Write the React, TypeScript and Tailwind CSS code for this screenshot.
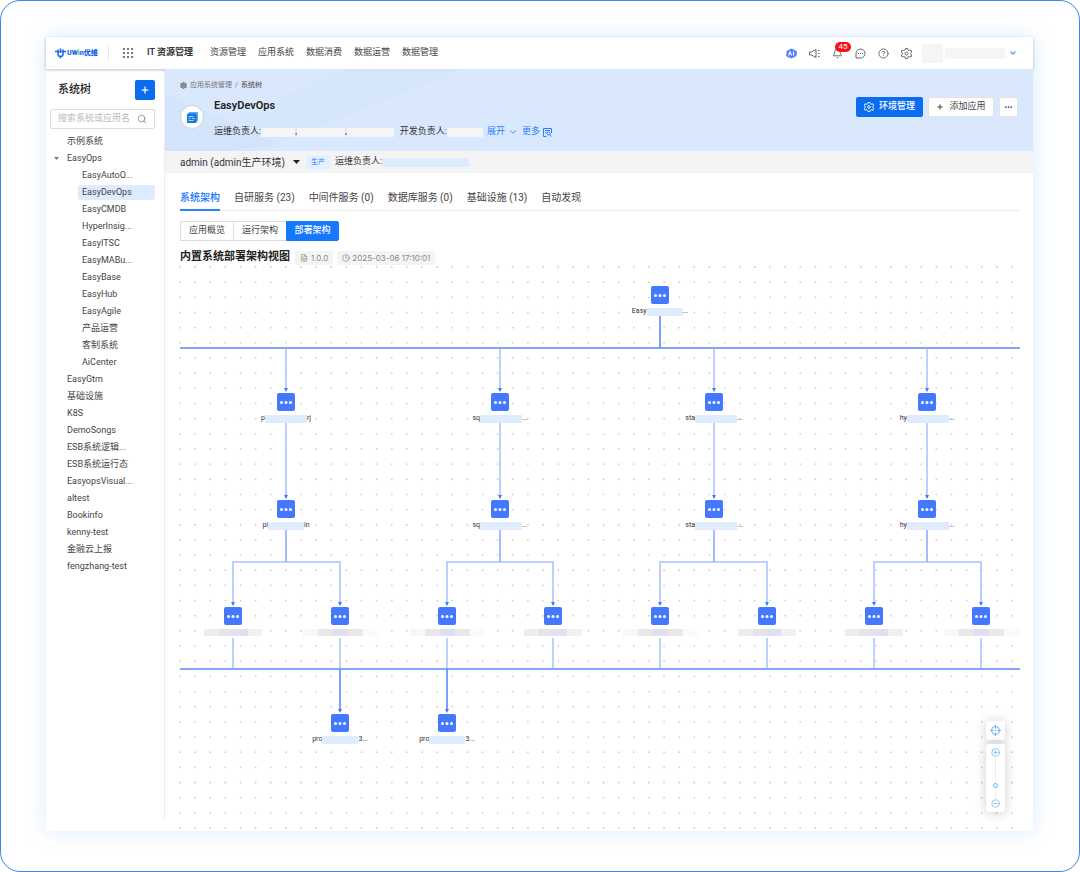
import type { ReactNode } from "react";
import { ChevronDown, CirclePlus, CircleMinus, CircleHelp, Clock, FileText, Plus, Search, Settings, Bell } from "lucide-react";

const navItems = ["资源管理", "应用系统", "数据消费", "数据运营", "数据管理"];

const treeItems = [
  { name: "示例系统", level: 0 },
  { name: "EasyOps", level: 0, open: true },
  { name: "EasyAutoO...", level: 1 },
  { name: "EasyDevOps", level: 1, active: true },
  { name: "EasyCMDB", level: 1 },
  { name: "HyperInsig...", level: 1 },
  { name: "EasyITSC", level: 1 },
  { name: "EasyMABu...", level: 1 },
  { name: "EasyBase", level: 1 },
  { name: "EasyHub", level: 1 },
  { name: "EasyAgile", level: 1 },
  { name: "产品运营", level: 1 },
  { name: "客制系统", level: 1 },
  { name: "AiCenter", level: 1 },
  { name: "EasyGtm", level: 0 },
  { name: "基础设施", level: 0 },
  { name: "K8S", level: 0 },
  { name: "DemoSongs", level: 0 },
  { name: "ESB系统逻辑...", level: 0 },
  { name: "ESB系统运行态", level: 0 },
  { name: "EasyopsVisual...", level: 0 },
  { name: "altest", level: 0 },
  { name: "Bookinfo", level: 0 },
  { name: "kenny-test", level: 0 },
  { name: "金融云上报", level: 0 },
  { name: "fengzhang-test", level: 0 },
];

const tabs = ["系统架构", "自研服务 (23)", "中间件服务 (0)", "数据库服务 (0)", "基础设施 (13)", "自动发现"];
const views = ["应用概览", "运行架构", "部署架构"];

// node centres on the canvas, top-left of the canvas is 0,0
const nodes = [
  { x: 480, y: 30, start: "Easy", end: "...", short: true },
  { x: 106, y: 137, start: "p", end: "rj" },
  { x: 320, y: 137, start: "sq", end: "..." },
  { x: 534, y: 137, start: "sta", end: "..." },
  { x: 747, y: 137, start: "hy", end: "..." },
  { x: 106, y: 244, start: "pi", end: "in", short: true },
  { x: 320, y: 244, start: "sq", end: "..." },
  { x: 534, y: 244, start: "sta", end: "..." },
  { x: 747, y: 244, start: "hy", end: "..." },
  { x: 160, y: 458, start: "pro", end: "3...", short: true },
  { x: 267, y: 458, start: "pro", end: "3...", short: true },
];
const leaves = [
  { x: 53 },
  { x: 160, wide: true },
  { x: 267, wide: true },
  { x: 373 },
  { x: 480, wide: true },
  { x: 587 },
  { x: 694 },
  { x: 801, wide: true },
];
const trunks = [106, 320, 534, 747];

export default function App() {
  return (
    <div className="flex min-h-screen flex-col rounded-[20px] border border-[#3f86ec] bg-white pt-9 pr-[46px] pb-10 pl-[45px] font-[Roboto,'Noto_Sans_CJK_SC',sans-serif] text-[9px] text-[#444]">
      <div className="flex flex-1 flex-col bg-white shadow-[0_0_20px_rgba(80,170,255,0.22)]">
        <Header />
        <div className="flex flex-1">
          <Sidebar />
          <main className="flex min-w-0 flex-1 flex-col">
            <Banner />
            <EnvBar />
            <Workspace />
          </main>
        </div>
      </div>
    </div>
  );
}

function Header() {
  return (
    <header className="relative flex h-8 items-center bg-white pr-4 pl-[9px] shadow-[0_1px_3px_rgba(0,0,0,0.25)]">
      <Logo />
      <div className="ml-[10px] h-[14px] w-px bg-gray-200" />
      <button aria-label="应用" className="ml-[14px] text-[#777]">
        <svg className="size-[10px]" viewBox="0 0 10 10" fill="currentColor">
          {[0, 4, 8].map((y) => [0, 4, 8].map((x) => <rect key={`${x}-${y}`} x={x} y={y} width="2" height="2" />))}
        </svg>
      </button>
      <a href="#" className="ml-[14px] w-[45px] font-semibold whitespace-nowrap text-[#333]">IT 资源管理</a>
      <nav className="ml-[18px] flex gap-3">
        {navItems.map((item) => (
          <a key={item} href="#">{item}</a>
        ))}
      </nav>
      <div className="ml-auto flex items-center gap-3 text-[#666]">
        <button aria-label="AI 助手"><AiIcon /></button>
        <button aria-label="公告"><MegaphoneIcon /></button>
        <button aria-label="通知" className="relative">
          <Bell className="size-[11px]" strokeWidth={2} />
          <span className="absolute -top-[6px] left-[3px] flex h-[10px] w-4 items-center justify-center rounded-full bg-[#fb0d1b] text-[8px] text-white">45</span>
        </button>
        <button aria-label="消息">
          <svg className="size-[11px]" viewBox="0 0 22 22" fill="none" stroke="currentColor" strokeWidth="2">
            <path d="M2 20V11a9 9 0 1 1 9 9z" />
            <path d="M6 11h2M10 11h2M14 11h2" />
          </svg>
        </button>
        <button aria-label="帮助"><CircleHelp className="size-[11px]" strokeWidth={2} /></button>
        <button aria-label="设置"><GearIcon className="size-[11px]" /></button>
      </div>
      <button aria-label="账户" className="ml-[10px] flex items-center">
        <span className="h-[19px] w-[21px] bg-[#f5f5f5]" />
        <span className="ml-[2px] h-[11px] w-[60px] bg-[#f5f5f5]" />
        <ChevronDown className="ml-1 size-2 text-[#5b9bff]" strokeWidth={4} />
      </button>
    </header>
  );
}

function Sidebar() {
  return (
    <aside className="mb-3 w-[119px] shrink-0 border-r border-[#eee] pt-[11px] pr-[9px] pl-1">
      <div className="flex items-center justify-between pl-2">
        <h2 className="text-[11px] font-medium text-[#222]">系统树</h2>
        <button aria-label="新增" className="flex size-5 items-center justify-center rounded-[2px] bg-[#0b6cf0] text-white">
          <Plus className="size-[10px]" strokeWidth={3} />
        </button>
      </div>
      <label className="mt-[9px] flex h-5 items-center rounded-[2px] border border-[#ddd] px-[7px]">
        <input aria-label="搜索" placeholder="搜索系统或应用名" className="min-w-0 flex-1 outline-none placeholder:text-[#bbb]" />
        <Search className="size-[10px] text-[#888]" strokeWidth={2} />
      </label>
      <ul className="mt-1">
        {treeItems.map((item) => (
          <li key={item.name} className={item.level ? "pl-7" : "pl-[14px]"}>
            <a href="#" className="relative flex h-[17px] items-center">
              {item.open && <Caret className="absolute -left-[10px] h-[3px] w-[5px] text-[#777]" />}
              <span className={`flex h-[15px] w-full items-center rounded-[3px] ${item.level ? "pl-1" : "pl-[3px]"} ${item.active ? "bg-[#deebfe]" : ""}`}>
                {item.name}
              </span>
            </a>
          </li>
        ))}
      </ul>
    </aside>
  );
}

function Banner() {
  return (
    <section className="relative flex h-[82px] bg-[#d9e8fd] pt-[11px] pr-[15px] pl-[15px]">
      <svg className="absolute inset-0 h-full w-[300px]" viewBox="0 0 300 82" preserveAspectRatio="none">
        <path d="M0 25L115 75L60 82H0z" fill="#cfdff7" opacity="0.5" />
        <path d="M0 82L180 0H300L90 82z" fill="#d2e2f8" opacity="0.3" />
      </svg>
      <div className="relative flex-1">
        <div className="flex h-[10px] items-center gap-[3px] text-[7px] text-[#777]">
          <Settings className="size-[7px]" strokeWidth={4} />
          <a href="#">应用系统管理</a>
          <span>/</span>
          <span className="text-[#444]">系统树</span>
        </div>
        <div className="mt-[9px] flex gap-[10px]">
          <div className="mt-[6px] flex size-6 items-center justify-center rounded-full border border-[#c5d4ec] bg-white">
            <AppIcon />
          </div>
          <div>
            <h1 className="text-[11px] leading-[14px] font-semibold text-[#222]">EasyDevOps</h1>
            <div className="mt-[13px] flex h-3 items-center text-[#333]">
              <span>运维负责人:</span>
              <Masked className="h-[9px] w-[34px] bg-[#f5f5f5]" />
              <span>,</span>
              <Masked className="h-[9px] w-12 bg-[#f5f5f5]" />
              <span>,</span>
              <Masked className="h-[9px] w-[47px] bg-[#f5f5f5]" />
              <span className="ml-[6px]">开发负责人:</span>
              <Masked className="h-[9px] w-9 bg-[#f5f5f5]" />
              <button className="ml-1 flex items-center gap-[3px] text-[#2b80ff]">
                展开 <ChevronDown className="size-[10px]" strokeWidth={2} />
              </button>
              <button className="ml-1 flex items-center gap-[3px] text-[#2b80ff]">
                更多 <DetailIcon />
              </button>
            </div>
          </div>
        </div>
      </div>
      <div className="relative mt-[17px] flex h-5 gap-[5px]">
        <button className="flex w-[67px] items-center justify-center gap-[5px] rounded-[2px] bg-[#0b6cf0] font-medium text-white">
          <GearIcon className="size-[10px]" />环境管理
        </button>
        <button className="flex w-[66px] items-center justify-center gap-[5px] rounded-[2px] border border-[#e3e3e3] bg-white">
          <Plus className="size-2" strokeWidth={3} />添加应用
        </button>
        <button aria-label="更多操作" className="flex w-[19px] items-center justify-center rounded-[2px] border border-[#e3e3e3] bg-white">
          <Dots className="h-[2px] w-[7px]" />
        </button>
      </div>
    </section>
  );
}

function EnvBar() {
  return (
    <div className="flex h-[22px] items-center bg-[#f4f4f4] pl-[15px] text-[#333]">
      <button className="flex items-center gap-2 text-[10px]">
        admin (admin生产环境)
        <Caret className="h-1 w-[7px] text-[#222]" />
      </button>
      <span className="ml-[6px] flex h-[14px] items-center rounded-[2px] bg-[#e3f0ff] px-[5px] text-[7px] text-[#2b80ff]">生产</span>
      <span className="ml-[5px]">运维负责人:</span>
      <Masked className="h-[9px] w-[87px] bg-[#deebfd]" />
    </div>
  );
}

function Workspace() {
  return (
    <section className="flex-1 pr-[13px] pl-[15px]">
      <div role="tablist" className="flex h-[38px] gap-[14px] border-b border-[#eee] text-[10px]">
        {tabs.map((tab, i) => (
          <button
            key={tab}
            role="tab"
            aria-selected={i === 0}
            className={`-mb-px border-b-2 pt-3 ${i === 0 ? "border-[#2b80ff] font-medium text-[#1677ff]" : "border-transparent"}`}
          >
            {tab}
          </button>
        ))}
      </div>
      <div className="mt-[10px] flex h-5">
        {views.map((view, i) => (
          <button
            key={view}
            className={`w-[53px] border ${i === 2 ? "rounded-r-[2px] border-[#1677ff] bg-[#1677ff] font-medium text-white" : "border-r-0 border-[#ddd]"}`}
          >
            {view}
          </button>
        ))}
      </div>
      <div className="mt-[9px] flex h-[15px] items-center">
        <h2 className="text-[11px] font-semibold text-[#222]">内置系统部署架构视图</h2>
        <span className="ml-[5px] flex h-[14px] items-center gap-[3px] rounded-[2px] bg-[#f4f4f4] px-[5px] font-[Inter] text-[8px] text-[#888]">
          <FileText className="size-2" strokeWidth={2} />1.0.0
        </span>
        <span className="ml-1 flex h-[14px] items-center gap-[2px] rounded-[2px] bg-[#f4f4f4] px-[5px] font-[Inter] text-[8px] text-[#888]">
          <Clock className="size-2" strokeWidth={2} />2025-03-06 17:10:01
        </span>
      </div>
      <Topology />
    </section>
  );
}

function Topology() {
  return (
    <div className="relative h-[565px] w-full">
      <svg className="absolute inset-0 overflow-visible" width="840" height="565" viewBox="0 0 840 565" fill="none">
        {Array.from({ length: 38 }, (_, row) =>
          Array.from({ length: 56 }, (_, col) => (
            <circle key={`${row}-${col}`} cx={(col * 832) / 55} cy={2 + (row * 561) / 37} r="0.9" fill="#cfcfcf" />
          ))
        )}
        <g stroke="#a9c0fd" strokeWidth="1.5">
          {trunks.map((x) => (
            <path key={x} d={`M${x} 83V126M${x} 158V233`} />
          ))}
          {trunks.map((x, i) => (
            <path key={x} d={`M${leaves[i * 2].x} 340V297H${leaves[i * 2 + 1].x}V340`} />
          ))}
          {leaves.map(({ x }) => (
            <path key={x} d={`M${x} 373V404`} />
          ))}
        </g>
        <g stroke="#86a8fc" strokeWidth="1.5">
          {trunks.map((x) => (
            <path key={x} d={`M${x} 265V297`} />
          ))}
        </g>
        <path d="M0 83H840M0 404H840" stroke="#84a6fc" strokeWidth="2" />
        <path d="M480 51V83M160 404V446M267 404V446" stroke="#4f82ff" strokeWidth="1.5" />
        <g fill="#4378ff">
          {trunks.map((x) => [125, 232].map((y) => <path key={`${x}-${y}`} d={`M${x - 2} ${y - 2}h4l-2 4z`} />))}
          {leaves.map(({ x }) => (
            <path key={x} d={`M${x - 2} 337h4l-2 4z`} />
          ))}
          {[160, 267].map((x) => (
            <path key={x} d={`M${x - 2} 444h4l-2 4z`} />
          ))}
        </g>
      </svg>
      {nodes.map((node) => (
        <Node key={`${node.x}-${node.y}`} x={node.x} y={node.y}>
          {node.start}
          <Masked className={`h-2 bg-[#dfecfe] ${node.short ? "w-9" : "w-[42px]"}`} />
          {node.end}
        </Node>
      ))}
      {leaves.map(({ x, wide }) => (
        <Node key={x} x={x} y={351}>
          {wide ? (
            <Masked className="h-[7px] w-[75px] bg-[linear-gradient(90deg,#f7f7f7_20%,#e8e8ea_20%_40%,#dedff3_40%_60%,#e9e9eb_60%_80%,#fafafa_80%)]" />
          ) : (
            <Masked className="h-[7px] w-[58px] bg-[linear-gradient(90deg,#eeeeee_25%,#e4e4ea_25%_50%,#dfe1f3_50%_75%,#f0f0f0_75%)]" />
          )}
        </Node>
      ))}
      <Controls />
    </div>
  );
}

function Node({ x, y, children }: { x: number; y: number; children: ReactNode }) {
  return (
    <div className="absolute flex w-20 -translate-x-1/2 flex-col items-center" style={{ left: x, top: y - 9 }}>
      <button aria-label="节点" className="flex size-[18px] items-center justify-center rounded-[2px] bg-[#4378ff] text-white">
        <Dots className="h-[3px] w-3" />
      </button>
      <div className="mt-[3px] flex h-[9px] w-full items-center justify-center text-[7px] leading-none text-[#333]">{children}</div>
    </div>
  );
}

function Controls() {
  return (
    <div className="absolute right-[15px] bottom-[18px] flex w-[19px] flex-col gap-1 text-[#6cb2f8]">
      <button aria-label="居中" className="flex h-[19px] items-center justify-center rounded-[2px] bg-white shadow-[0_1px_12px_rgba(0,0,0,0.2)]">
        <svg className="size-[11px]" viewBox="0 0 22 22" fill="none" stroke="currentColor" strokeWidth="2">
          <circle cx="11" cy="11" r="8" />
          <path d="M11 0v7M11 15v7M0 11h7M15 11h7M10 11h2" />
        </svg>
      </button>
      <div className="flex h-[68px] flex-col items-center rounded-[2px] bg-white py-1 shadow-[0_1px_12px_rgba(0,0,0,0.2)]">
        <button aria-label="放大"><CirclePlus className="size-[9px]" strokeWidth={2} /></button>
        <div className="h-[26px] w-px bg-[#eee]" />
        <span className="size-[5px] rounded-full border border-current" />
        <div className="h-[11px] w-px bg-[#eee]" />
        <button aria-label="缩小"><CircleMinus className="size-[9px]" strokeWidth={2} /></button>
      </div>
    </div>
  );
}

function Masked({ className }: { className: string }) {
  return <span className={`inline-block shrink-0 ${className}`} />;
}

function Dots({ className }: { className: string }) {
  return (
    <svg className={className} viewBox="0 0 12 3" fill="currentColor">
      <circle cx="1.5" cy="1.5" r="1.5" />
      <circle cx="6" cy="1.5" r="1.5" />
      <circle cx="10.5" cy="1.5" r="1.5" />
    </svg>
  );
}

function Caret({ className }: { className: string }) {
  return (
    <svg className={className} viewBox="0 0 8 5" preserveAspectRatio="none" fill="currentColor">
      <path d="M0 0h8L4 5z" />
    </svg>
  );
}

function GearIcon({ className }: { className: string }) {
  return (
    <svg className={className} viewBox="0 0 22 22" fill="none" stroke="currentColor" strokeWidth="2">
      <path d="M9 1h4l1 3 3 1 3-1 1 4-2 3 2 3-1 4-3-1-3 1-1 3H9l-1-3-3-1-3 1-1-4 2-3-2-3 1-4 3 1 3-1z" />
      <circle cx="11" cy="11" r="3" />
    </svg>
  );
}

function MegaphoneIcon() {
  return (
    <svg className="size-[11px]" viewBox="0 0 22 22" fill="none" stroke="currentColor" strokeWidth="2">
      <path d="M1 8h4l9-5v16l-9-5H1z" />
      <path d="M18 5h3M18 11h3M18 17h3" />
    </svg>
  );
}

function DetailIcon() {
  return (
    <svg className="size-[9px]" viewBox="0 0 18 18" fill="none" stroke="currentColor" strokeWidth="2">
      <path d="M7 17H1V1h16v9M4 5h10M4 9h3" />
      <circle cx="11" cy="11" r="3" />
      <path d="M13 13l4 4" />
    </svg>
  );
}

function AiIcon() {
  return (
    <svg className="size-[11px]" viewBox="0 0 22 22">
      <path d="M11 1l10 5v10l-10 5-10-5V6z" fill="#4a86ff" />
      <path d="M1 12v4l5 3M21 6v6" fill="none" stroke="#c26cf0" strokeWidth="2" />
      <path d="M5 15l3-8 3 8M6 12h4M15 7v8" fill="none" stroke="#fff" strokeWidth="2" />
    </svg>
  );
}

function AppIcon() {
  return (
    <svg className="size-[11px]" viewBox="0 0 22 22">
      <rect x="3" y="0" width="19" height="19" rx="2" fill="#5fa8ee" />
      <rect x="0" y="3" width="19" height="19" rx="2" fill="#1677dc" />
      <path d="M3 9h10M3 13h4M3 17h10M10 13h6" stroke="#d8ecff" strokeWidth="1.5" />
    </svg>
  );
}

function Logo() {
  return (
    <a href="#" aria-label="优维" className="flex w-[43px] items-center gap-px text-[7px] font-black whitespace-nowrap text-[#1a66e8]">
      <svg className="size-[11px] shrink-0" viewBox="0 0 22 22" fill="none" stroke="currentColor" strokeWidth="3">
        <path d="M6 3v9a5 5 0 0 0 10 0V3M0 7h9M13 7h9M11 1v9M11 17v4" />
      </svg>
      <span className="leading-none">UW<span className="text-[#35c92f]">i</span>n优维</span>
    </a>
  );
}
